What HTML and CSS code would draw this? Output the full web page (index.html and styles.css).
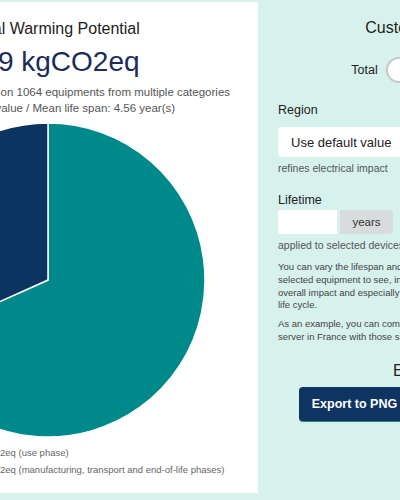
FILE: index.html
```html
<!DOCTYPE html>
<html lang="en">
<head>
<meta charset="utf-8">
<title>Global Warming Potential</title>
<link rel="stylesheet" href="styles.css">
</head>
<body>
<div class="page">
  <section class="card">
    <header class="card-head">
      <h2 class="card-title">Global Warming Potential</h2>
      <div class="total">45.9 kgCO2eq</div>
      <p class="sub">Results on 1064 equipments from multiple categories</p>
      <p class="sub">Global value / Mean life span: 4.56 year(s)</p>
    </header>
    <div class="chart">
      <svg width="316" height="316" viewBox="0 0 316 316">
        <path class="slice-teal" d="M158,158 L158,1 A157,157 0 1 1 14.7,222.1 Z"/>
        <path class="slice-navy" d="M158,158 L158,1 A157,157 0 0 0 14.7,222.1 Z"/>
      </svg>
    </div>
    <ul class="legend">
      <li><span class="swatch swatch-teal"></span>31.4 kgCO2eq (use phase)</li>
      <li><span class="swatch swatch-navy"></span>14.5 kgCO2eq (manufacturing, transport and end-of-life phases)</li>
    </ul>
  </section>
  <aside class="panel">
    <h2 class="panel-title">Customization</h2>
    <div class="toggle-row">
      <span>Total</span>
      <span class="switch"><span class="knob"></span></span>
      <span>Per unit</span>
    </div>
    <div class="field-label field-region">Region</div>
    <div class="select">Use default value<span class="caret"></span></div>
    <p class="hint">refines electrical impact</p>
    <div class="field-label field-lifetime">Lifetime</div>
    <div class="input-group"><span class="input"></span><span class="addon">years</span></div>
    <p class="hint">applied to selected devices</p>
    <p class="info info-first">You can vary the lifespan and/or the region of the<br>selected equipment to see, in real time, the effect on<br>overall impact and especially on each stage of the<br>life cycle.</p>
    <p class="info info-second">As an example, you can compare a server in Germany and a<br>server in France with those same parameters.</p>
    <h2 class="panel-title export-title">Export</h2>
    <div class="buttons">
      <button class="btn">Export to PNG</button>
      <button class="btn">Export to CSV</button>
    </div>
  </aside>
</div>
</body>
</html>
```
FILE: styles.css
```css
html, body {
  margin: 0;
  padding: 0;
}
body {
  background: #d7f1ed;
  overflow: hidden;
  font-family: "Liberation Sans", Arial, sans-serif;
  color: #222;
}
.page {
  display: flex;
  align-items: flex-start;
  gap: 3px;
  margin-left: -162px;
  padding-top: 2px;
}
.card {
  flex: 0 0 420px;
  height: 491px;
  box-sizing: border-box;
  background: #fff;
  padding-top: 17px;
}
.card-head {
  padding: 0 20px 0 121px;
  white-space: nowrap;
}
.card-title {
  margin: 0;
  font-size: 16px;
  line-height: 20px;
  font-weight: normal;
  color: #222;
}
.total {
  margin-top: 7px;
  font-size: 28px;
  line-height: 32px;
  color: #1b2c5a;
}
.sub {
  margin: 0;
  font-size: 11.5px;
  line-height: 15.5px;
  color: #555;
}
.total + .sub {
  margin-top: 7px;
}
.chart {
  display: flex;
  justify-content: center;
  margin-top: 6px;
}
.chart svg {
  display: block;
}
.slice-teal {
  fill: #00898a;
  stroke: #fff;
  stroke-width: 1.5;
  stroke-linejoin: round;
}
.slice-navy {
  fill: #0c3461;
  stroke: #fff;
  stroke-width: 1.5;
  stroke-linejoin: round;
}
.legend {
  list-style: none;
  margin: 6px 0 0;
  padding: 0 0 0 101.6px;
  font-size: 9.5px;
  line-height: 17px;
  color: #666;
  white-space: nowrap;
}
.legend li {
  display: flex;
  align-items: center;
  gap: 5px;
}
.swatch {
  width: 10px;
  height: 10px;
  flex: 0 0 10px;
}
.swatch-teal { background: #00898a; }
.swatch-navy { background: #0c3461; }

.panel {
  flex: 0 0 310px;
  box-sizing: border-box;
  padding: 16px 17px 0;
}
.panel-title {
  margin: 0;
  font-size: 16px;
  line-height: 20px;
  font-weight: normal;
  text-align: center;
  color: #222;
}
.toggle-row {
  display: flex;
  justify-content: center;
  align-items: center;
  gap: 8px;
  margin-top: 19px;
  height: 26px;
  font-size: 12.5px;
  color: #222;
}
.switch {
  display: block;
  width: 44px;
  height: 26px;
  border-radius: 13px;
  background: #e4e4e4;
}
.knob {
  display: block;
  width: 26px;
  height: 26px;
  border-radius: 50%;
  box-sizing: border-box;
  background: #fff;
  border: 2px solid #c6c9c9;
}
.field-label {
  font-size: 12.5px;
  line-height: 16px;
  color: #222;
}
.field-region { margin-top: 19px; }
.field-lifetime { margin-top: 17px; }
.select {
  display: flex;
  align-items: center;
  justify-content: space-between;
  margin-top: 9px;
  height: 30px;
  padding: 0 13px;
  border-radius: 4px;
  background: #fff;
  font-size: 13px;
  color: #222;
}
.caret {
  width: 0;
  height: 0;
  border-left: 4px solid transparent;
  border-right: 4px solid transparent;
  border-top: 5px solid #333;
}
.hint {
  margin: 4px 0 0;
  font-size: 10.5px;
  line-height: 14px;
  color: #555;
  white-space: nowrap;
}
.input-group {
  display: flex;
  gap: 3px;
  margin-top: 2px;
  height: 24px;
}
.input {
  width: 59px;
  background: #fff;
  border-radius: 3px 0 0 3px;
}
.addon {
  display: flex;
  align-items: center;
  justify-content: center;
  width: 53px;
  background: #d9dcdc;
  border-radius: 0 3px 3px 0;
  font-size: 11.5px;
  color: #333;
}
.info {
  margin: 0;
  font-size: 9.5px;
  line-height: 12.8px;
  color: #444;
  white-space: nowrap;
}
.info-first { margin-top: 9px; }
.info-second { margin-top: 6px; }
.export-title { margin-top: 17px; }
.buttons {
  display: flex;
  justify-content: center;
  gap: 13px;
  margin-top: 6px;
}
.btn {
  height: 34px;
  padding: 0 13px;
  border: none;
  border-radius: 4px;
  background: #0f3461;
  box-shadow: 0 1px 0 #2d817b;
  color: #fff;
  font-family: "Liberation Sans", Arial, sans-serif;
  font-size: 12.5px;
  font-weight: bold;
  white-space: nowrap;
}
```
